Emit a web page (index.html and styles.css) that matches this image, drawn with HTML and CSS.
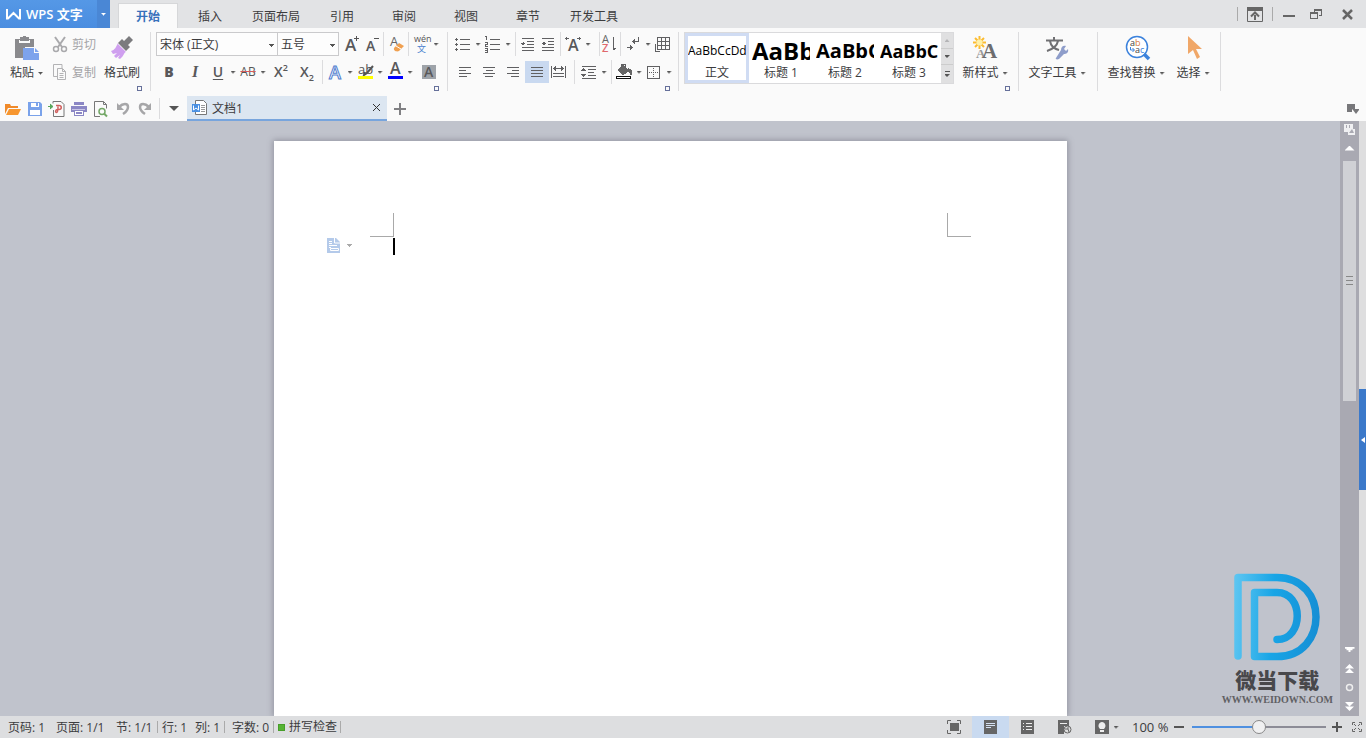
FILE: index.html
```html
<!DOCTYPE html>
<html lang="zh-CN">
<head>
<meta charset="utf-8">
<meta name="viewport" content="width=device-width, initial-scale=1">
<title>WPS 文字 - 文档1</title>
<link rel="stylesheet" href="styles.css">
</head>
<body>
<header class="titlebar">
  <button class="brand" aria-label="WPS 文字">
    <svg width="16" height="14" viewBox="0 0 16 14"><path d="M1 2v9.500h1L7.500 6l5.500 5.500h1V2" fill="none" stroke="#fff" stroke-width="2"/></svg>
    <span>WPS 文字</span>
  </button>
  <button class="brand-more" aria-label="菜单"><i class="tri"></i></button>
  <nav class="tabs">
    <button class="tab active">开始</button>
    <button class="tab">插入</button>
    <button class="tab">页面布局</button>
    <button class="tab">引用</button>
    <button class="tab">审阅</button>
    <button class="tab">视图</button>
    <button class="tab">章节</button>
    <button class="tab">开发工具</button>
  </nav>
  <div class="window">
    <i class="bar"></i>
    <button class="w34" aria-label="隐藏功能区"><svg width="16" height="15"><path d="M.5.500h15v14H.5z" fill="none" stroke="#666"/><path d="M0 0h16v4H0zM7 8h2v5H7z" fill="#666"/><path d="M4 9.500L8 5.500l4 4" fill="none" stroke="#666" stroke-width="2"/></svg></button>
    <i class="bar"></i>
    <button class="w32" aria-label="最小化"><svg width="12" height="12"><path d="M0 7h12v2H0z" fill="#666"/></svg></button>
    <button class="w22" aria-label="还原"><svg width="12" height="11" fill="none" stroke="#666" shape-rendering="crispEdges"><path d="M.5 4.500h7v5h-7zM0 3.500h8M4 3V.500h7.500v6H9M4 1.500h8"/></svg></button>
    <button class="w39" aria-label="关闭"><svg width="11" height="11"><path d="M1 1l9 9M10 1l-9 9" stroke="#666" stroke-width="2.500"/></svg></button>
  </div>
</header>

<section class="ribbon" aria-label="开始">
  <div class="group clip">
    <button class="big w45">
      <svg width="26" height="24"><path d="M1 3h5V1h3V0h3v1h3v2h5v8h-9v11H1z" fill="#8a8a8d"/><path d="M5 4h11v3H5z" fill="#fafafa"/><path d="M6 3h9v2H6z" fill="#8a8a8d"/><path d="M9 12h11v5h5v7H9z" fill="#7da3ec"/><path d="M21 12l4 4h-4z" fill="#7da3ec"/></svg>
      <span>粘贴 <i class="tri"></i></span>
    </button>
    <div class="stack w50">
      <button class="text-btn" disabled><svg width="16" height="17" fill="none" stroke="#a9a9ac" stroke-width="2"><path d="M3 1l7 10M13 1L6 11"/><circle cx="4" cy="13" r="2.500" stroke-width="1.500"/><circle cx="12" cy="13" r="2.500" stroke-width="1.500"/></svg><span>剪切</span></button>
      <button class="text-btn" disabled><svg width="16" height="17" fill="none" stroke="#b3b3b5"><path d="M5 12.500H1.500V.500H10V4M5.500 4.500h5l3 3v8h-8zM7.500 9.500h4M7.500 11.500h4M7.500 13.500h4M10.500 4.500v3h3"/></svg><span>复制</span></button>
    </div>
    <button class="big w46">
      <svg width="24" height="24"><path d="M19 0l4 4-5 5 2 2-4 4-8-8 4-4 2 2z" fill="#7b7b7e"/><path d="M8 8l8 8c-2 0-2 4-6 7l-2-1 2-3-4 3-2-2 3-3-4 1-2-3c4-1 5-4 7-8z" fill="#cf9fef"/></svg>
      <span>格式刷</span>
    </button>
    <button class="launcher" aria-label="剪贴板"></button>
  </div>

  <div class="group font">
    <div class="row">
      <label class="combo w122"><select aria-label="字体"><option>宋体 (正文)</option></select><i class="tri"></i></label>
      <label class="combo w62"><select aria-label="字号"><option>五号</option></select><i class="tri"></i></label>
      <button class="b20" aria-label="增大字号"><svg width="18" height="20"><text x="3" y="17" class="t-a16">A</text><path d="M12 4.500h5M14.500 2v5" stroke="#555"/></svg></button>
      <button class="b20" aria-label="减小字号"><svg width="18" height="20"><text x="4" y="17" class="t-a14">A</text><path d="M12 4.500h5" stroke="#555"/></svg></button>
      <i class="sep"></i>
      <button class="b20" aria-label="清除格式"><svg width="18" height="20"><text x="3" y="12" class="t-a14l">A</text><path d="M7 14l5-5 5 3-5 5c-2 1-6 0-5-3z" fill="#f0a050"/><path d="M9 12l5 3" stroke="#fff"/></svg></button>
      <i class="sep"></i>
      <button class="b20" aria-label="拼音指南"><svg width="20" height="20"><text x="3" y="8" class="t-py">wén</text><text x="6" y="18" class="t-wen">文</text></svg></button>
      <button class="drop" aria-label="更多"><i class="tri"></i></button>
    </div>
    <div class="row">
      <button class="b26 glyph"><b>B</b></button>
      <button class="b26 glyph serif"><em>I</em></button>
      <button class="b20 glyph"><u>U</u></button>
      <button class="drop" aria-label="下划线"><i class="tri"></i></button>
      <button class="b20 strike"><s>AB</s></button>
      <button class="drop" aria-label="删除线"><i class="tri"></i></button>
      <button class="b26 glyph"><span>X<sup>2</sup></span></button>
      <button class="b26 glyph"><span>X<sub>2</sub></span></button>
      <i class="sep"></i>
      <button class="b20" aria-label="文字效果"><svg width="18" height="20"><text x="3" y="17" class="t-fx">A</text></svg></button>
      <button class="drop" aria-label="更多"><i class="tri"></i></button>
      <button class="b20" aria-label="突出显示"><svg width="18" height="20"><text x="2" y="12" class="t-ab">ab</text><path d="M17 4l-6 7-3 2 1-3" stroke="#555" stroke-width="2" fill="none"/><path d="M2 14h15v3H2z" fill="#ff0"/></svg></button>
      <button class="drop" aria-label="更多"><i class="tri"></i></button>
      <button class="b20" aria-label="字体颜色"><svg width="18" height="20"><text x="4" y="12" class="t-a15">A</text><path d="M2 14h15v3H2z" fill="#00f"/></svg></button>
      <button class="drop" aria-label="更多"><i class="tri"></i></button>
      <button class="b28" aria-label="字符底纹"><svg width="16" height="16"><path d="M1 1h14v14H1z" fill="#9ea3a9"/><text x="3" y="13" class="t-a14">A</text></svg></button>
    </div>
    <button class="launcher" aria-label="字体设置"></button>
  </div>

  <div class="group para">
    <div class="row lines">
      <button class="b20" aria-label="项目符号"><svg width="18" height="20"><path d="M6 5.500h10M6 10.500h10M6 15.500h10"/><path d="M1 5.500h3M1 10.500h3M1 15.500h3M2.500 4v3M2.500 9v3M2.500 14v3"/></svg></button>
      <button class="drop" aria-label="更多"><i class="tri"></i></button>
      <button class="b20" aria-label="编号"><svg width="18" height="20"><path d="M6 5.500h10M6 10.500h10M6 15.500h10M1 2.500h1.500V6M1 8.500h2v1.500H1.500V12H4M1 14.500h2.500V18M1 16.500h2M1 18.500h3"/></svg></button>
      <button class="drop" aria-label="更多"><i class="tri"></i></button>
      <i class="sep"></i>
      <button class="b20" aria-label="减少缩进"><svg width="18" height="20"><path d="M3 4.500h12M8 7.500h7M8 10.500h7M3 13.500h12M3 16.500h12"/><path d="M2 9.500h4M4.500 8v3M3.500 9v2"/></svg></button>
      <button class="b20" aria-label="增加缩进"><svg width="18" height="20"><path d="M3 4.500h12M9 7.500h6M9 10.500h6M3 13.500h12M3 16.500h12"/><path d="M3 9.500h4M5.500 8v3M4.500 8v3"/></svg></button>
      <i class="sep"></i>
      <button class="b20" aria-label="中文版式"><svg width="18" height="20"><text x="4" y="17" class="t-a15">A</text><path d="M1 4.500h4M2.500 3v3M13 4.500h4M15.500 3v3"/></svg></button>
      <button class="drop" aria-label="更多"><i class="tri"></i></button>
      <i class="sep push"></i>
      <button class="b16" aria-label="排序"><svg width="16" height="20"><text x="0" y="9" class="t-sa">A</text><text x="0" y="18" class="t-sz">Z</text><path d="M11.500 3v13M12.500 14v2M13.500 14v1"/></svg></button>
      <i class="sep"></i>
      <button class="b20" aria-label="显示标记"><svg width="18" height="20"><path d="M14.500 3v4M8 7.500h7M10.500 5v5M9.500 6v3M3 13.500h6M6.500 11v5M7.500 12v3"/></svg></button>
      <button class="drop" aria-label="更多"><i class="tri"></i></button>
      <button class="b20" aria-label="表格"><svg width="18" height="20"><path d="M3.500 3.500h12v12h-12zM7.500 3v12M11.500 3v12M3 7.500h12M3 11.500h12M1.500 10v7H6"/></svg></button>
    </div>
    <div class="row lines">
      <button class="b24" aria-label="左对齐"><svg width="18" height="20"><path d="M3 5.500h12M3 8.500h7M3 11.500h12M3 14.500h8"/></svg></button>
      <button class="b24" aria-label="居中"><svg width="18" height="20"><path d="M3 5.500h12M6 8.500h7M3 11.500h12M5 14.500h8"/></svg></button>
      <button class="b24" aria-label="右对齐"><svg width="18" height="20"><path d="M3 5.500h12M8 8.500h7M3 11.500h12M7 14.500h8"/></svg></button>
      <button class="b24 on" aria-label="两端对齐"><svg width="18" height="20"><path d="M3 5.500h12M3 8.500h12M3 11.500h12M3 14.500h12"/></svg></button>
      <button class="b20" aria-label="分散对齐"><svg width="18" height="20"><path d="M1.500 4v12M15.500 4v12M3 6.500h11M4.500 5v3M12.500 5v3M5.500 4v5M11.500 4v5M3 11.500h11M3 14.500h11"/></svg></button>
      <i class="sep gap"></i>
      <button class="b20" aria-label="行距"><svg width="18" height="20"><path d="M2 4.500h14M8 7.500h8M8 10.500h6M8 13.500h8M2 16.500h14"/><path d="M1 8.500h5M2 7.500h3M3 6.500h1M1 12.500h5M2 13.500h3M3 14.500h1"/></svg></button>
      <button class="drop" aria-label="更多"><i class="tri"></i></button>
      <i class="sep"></i>
      <button class="b20" aria-label="底纹"><svg width="18" height="20"><path d="M2 8l6-5 7 6-7 4z" class="solid"/><path d="M13 6l4 2v5h-2z" class="solid"/><path d="M6.500 6V2.500h4V6"/><path d="M1.500 14.500h14v2h-14z" class="ink"/></svg></button>
      <button class="drop" aria-label="更多"><i class="tri"></i></button>
      <button class="b20" aria-label="边框"><svg width="18" height="20"><path d="M2.500 4.500h12v12h-12z"/><path d="M8.500 6v9M4 10.500h9" stroke-dasharray="1 1"/></svg></button>
      <button class="drop" aria-label="更多"><i class="tri"></i></button>
    </div>
    <button class="launcher" aria-label="段落设置"></button>
  </div>

  <div class="group styles">
    <div class="gallery">
      <button class="style on"><span class="sample s0">AaBbCcDd</span><span>正文</span></button>
      <button class="style"><span class="sample s1">AaBb</span><span>标题 1</span></button>
      <button class="style"><span class="sample s2">AaBbC</span><span>标题 2</span></button>
      <button class="style"><span class="sample s3">AaBbC</span><span>标题 3</span></button>
      <div class="scroller">
        <button aria-label="向上" disabled><i class="tri up"></i></button>
        <button aria-label="向下"><i class="tri"></i></button>
        <button aria-label="更多样式"><i class="dash"></i><i class="tri"></i></button>
      </div>
    </div>
    <button class="big w62b">
      <svg width="26" height="24"><g stroke="#fbbc30" stroke-width="2"><path d="M7.500 0v13M1 6.500h13M3 2l9 9M12 2l-9 9"/></g><circle cx="7.500" cy="6.500" r="3" fill="#fff1a8"/><text x="4" y="22" class="t-ns">A</text><text x="10" y="22" class="t-nb">A</text></svg>
      <span>新样式 <i class="tri"></i></span>
    </button>
    <button class="launcher" aria-label="样式设置"></button>
  </div>

  <div class="group tools">
    <button class="big w76">
      <svg width="26" height="24"><path d="M10 1v3M2 4.500h17M6 5c1 6 5 8 9 9M14 5c-1 5-5 8-11 10" fill="none" stroke="#707073" stroke-width="2"/><path d="M12 22l5-8c0-4 3-5 5-4l-2 3 2 2 2-2c1 4-2 5-4 5l-5 5c-2 1-4 0-3-1z" fill="#8e9dca"/></svg>
      <span>文字工具 <i class="tri"></i></span>
    </button>
  </div>

  <div class="group edit">
    <button class="big w76">
      <svg width="22" height="24"><circle cx="12" cy="11" r="10.500" fill="#fff" stroke="#3c82dc" stroke-width="1.500"/><path d="M19 18l5 5" stroke="#3c82dc" stroke-width="3.500"/><text x="5" y="10" class="t-f">a<tspan fill="#d8763a">b</tspan></text><text x="10" y="17" class="t-f">a<tspan fill="#3c82dc">c</tspan></text><path d="M5.500 11v3H9M7.500 12l2 2-2 2" fill="none" stroke="#3c82dc"/></svg>
      <span>查找替换 <i class="tri"></i></span>
    </button>
    <button class="big w38">
      <svg width="14" height="24"><path d="M2 0l14 13h-6l4 8-3 2-4-9-5 4z" fill="#f0a768"/></svg>
      <span>选择 <i class="tri"></i></span>
    </button>
  </div>
</section>

<div class="quickbar">
  <button class="b22" aria-label="打开"><svg width="16" height="16"><path d="M0 3h5l1 2h7v2H3l-3 6z" fill="#f08a2a"/><path d="M4 8h12l-3 6H1z" fill="#f7962f"/></svg></button>
  <button class="b22" aria-label="保存"><svg width="16" height="16"><path d="M1 1h12l2 2v12H1z" fill="#7aa2ea"/><path d="M4 2h8v4H4zM3 9h10v5H3z" fill="#fff"/><path d="M9 2h2v3H9z" fill="#7aa2ea"/></svg></button>
  <button class="b22" aria-label="输出为PDF"><svg width="18" height="16"><path d="M5 2.500V.500h8l3 3v12H5.500V9" fill="none" stroke="#777"/><path d="M0 5.500h3M2 3l3 2.500L2 8" fill="#57a55a" stroke="#57a55a"/><path d="M8 4.500h3c3 0 3 4 0 4h-1.500c-2 0-2.500 3-1 3s1.500-3 1.500-6" fill="none" stroke="#d0605e" stroke-width="1.500"/></svg></button>
  <button class="b22" aria-label="打印"><svg width="16" height="16"><path d="M3 1h10v3H3zM0 5h16v6h-3v4H3v-4H0z" fill="#8b87c5"/><path d="M4 10h8v4H4z" fill="#fff"/><path d="M5 11h6v2H5z" fill="#8b87c5"/><path d="M1 8h13v1H1z" fill="#c8c5e6"/></svg></button>
  <button class="b22" aria-label="打印预览"><svg width="16" height="16"><path d="M7 15.500H1.500v-15h9l3 3v4M10.500.500v3h3" fill="none" stroke="#777"/><circle cx="9" cy="10.500" r="3" fill="none" stroke="#74a867" stroke-width="1.500"/><path d="M11 12.500l3 3" stroke="#74a867" stroke-width="2"/></svg></button>
  <button class="b22" aria-label="撤销"><svg width="16" height="16"><path d="M4 6c4-4 9-4 9 0 0 3-2 5-5 7" fill="none" stroke="#a6a6a8" stroke-width="2.500"/><path d="M2 2v7h7z" fill="#a6a6a8"/></svg></button>
  <button class="b22" aria-label="恢复"><svg width="16" height="16"><path d="M12 6C8 2 3 2 3 6c0 3 2 5 5 7" fill="none" stroke="#a6a6a8" stroke-width="2.500"/><path d="M14 2v7H7z" fill="#a6a6a8"/></svg></button>
  <i class="sep tall"></i>
  <button class="b26" aria-label="自定义"><i class="tri large"></i></button>
  <div class="doc-tab">
    <svg width="16" height="15"><path d="M3.500 4V.500h8l3 3v11h-11V12" fill="#fff" stroke="#777"/><path d="M9 5.500h4M9 7.500h4M9 9.500h4M9 11.500h4" stroke="#999"/><path d="M0 4h8v8H0z" fill="#4a90e2"/><path d="M1.500 5.500V10L4 8l2.500 2V5.500" fill="none" stroke="#fff"/></svg>
    <span>文档1</span>
    <button class="close" aria-label="关闭文档"><svg width="9" height="9"><path d="M1 1l7 7M8 1L1 8" stroke="#333"/></svg></button>
  </div>
  <button class="b26" aria-label="新建"><svg width="12" height="12"><path d="M0 6h12M6 0v12" stroke="#808083" stroke-width="2"/></svg></button>
  <button class="b26 end" aria-label="任务窗格"><svg width="14" height="12"><path d="M1 1h8v5H6v3H1zM6 6h7v1l-3 4-3-4z" fill="#77777a"/></svg></button>
</div>

<main class="workspace">
  <div class="canvas">
    <article class="page">
      <div class="margins"><i class="corner left"></i><i class="corner right"></i></div>
      <div class="line">
        <button class="tag" aria-label="文档选项"><svg width="13" height="15"><path d="M0 0h9l4 4v11H0z" fill="#b4caea"/><path d="M7.500 0v5H13M2 3.500h3M2 5.500h3M2 7.500h8M3.500 10.500h8v2h-8zM2 9.500h2" fill="none" stroke="#fff"/></svg><i class="tri"></i></button>
        <i class="cursor"></i>
      </div>
    </article>
  </div>
  <div class="scrollbar">
    <button class="h18" aria-label="导航"><svg width="12" height="12"><path d="M0 0h9v5h2v6H4V8H0z" fill="#f0f0f2"/><path d="M2 1h1v3H2zM5 1h1v3H5zM5 9l3-4 2 4z" fill="#a9a9b2"/></svg></button>
    <button class="h22" aria-label="上移"><i class="tri up big-tri"></i></button>
    <div class="track"><div class="thumb"><i></i><i></i><i></i></div></div>
    <button class="h19" aria-label="下移"><i class="tri big-tri"></i></button>
    <button class="h19" aria-label="上一页"><svg width="9" height="9" fill="#fff"><path d="M0 4.500L4.500 0 9 4.500zM0 9l4.500-4.500L9 9z"/></svg></button>
    <button class="h19" aria-label="选择浏览对象"><svg width="9" height="9"><circle cx="4.500" cy="4.500" r="3" fill="none" stroke="#eee" stroke-width="1.500"/></svg></button>
    <button class="h19" aria-label="下一页"><svg width="9" height="9" fill="#fff"><path d="M0 0h9L4.500 4.500zM0 4.500h9L4.500 9z"/></svg></button>
  </div>
  <aside class="edge"><button aria-label="展开任务窗格"><svg width="4" height="6"><path d="M4 0v6L0 3z" fill="#fff"/></svg></button></aside>
  <div class="watermark">
    <svg width="86" height="88" viewBox="0 0 86 88">
      <defs><linearGradient id="blue" gradientUnits="userSpaceOnUse" x1="0" y1="40" x2="86" y2="44"><stop offset="0" stop-color="#5cc5f1"/><stop offset=".45" stop-color="#18a5e6"/><stop offset="1" stop-color="#168ed4"/></linearGradient></defs>
      <g fill="none" stroke="url(#blue)" stroke-width="7.500" stroke-linecap="round" stroke-linejoin="round"><path d="M4 83V4.500h39c52 0 52 79 0 79H20.500V19.500H43c27 0 27 47 0 47"/></g>
    </svg>
    <strong>微当下载</strong>
    <span>WWW.WEIDOWN.COM</span>
  </div>
</main>

<footer class="status">
  <span class="m48">页码: 1</span>
  <span class="m60">页面: 1/1</span>
  <span class="m41">节: 1/1</span>
  <span class="m38 cut">行: 1</span>
  <span class="m29">列: 1</span>
  <span class="m48 cut wide">字数: 0</span>
  <span class="cut spell"><i class="ok"></i>拼写检查</span>
  <i class="cut"></i>
  <div class="views">
    <button aria-label="全屏"><svg width="14" height="14"><path d="M3 3h9v8H3z" fill="#666"/><path d="M.5 4V.500H4M10 .500h3.500V4M.5 10v3.500H4M10 13.500h3.500V10" fill="none" stroke="#666"/></svg></button>
    <button class="on" aria-label="页面视图"><svg width="13" height="14"><path d="M0 0h13v14H0z" fill="#666"/><path d="M2 3.500h9M2 5.500h9M2 7.500h5" stroke="#d5e1f2"/></svg></button>
    <button aria-label="大纲"><svg width="13" height="14"><path d="M0 0h13v14H0z" fill="#666"/><path d="M2 3.500h1M5 3.500h6M2 6.500h1M5 6.500h6M2 9.500h1M5 9.500h6" stroke="#eee"/></svg></button>
    <button aria-label="Web 版式"><svg width="14" height="14"><path d="M0 0h11v6H6v8H0z" fill="#666"/><path d="M2 3.500h7" stroke="#eee"/><circle cx="9.500" cy="9.500" r="3.500" fill="#ddd" stroke="#666"/><path d="M7 9h3l1 3M10 7v2" fill="none" stroke="#666"/></svg></button>
    <button class="eye" aria-label="护眼模式"><svg width="14" height="14"><path d="M0 0h14v14H0z" fill="#666"/><path d="M5 9C2 6 4 2 7 2s5 4 2 7zM5 10h4v2H5z" fill="#eee"/></svg><i class="tri"></i></button>
  </div>
  <output class="percent" for="zoom">100 %</output>
  <button class="w22" aria-label="缩小"><svg width="10" height="10"><path d="M0 5h10" stroke="#555" stroke-width="2"/></svg></button>
  <input id="zoom" type="range" min="0" max="200" value="100" aria-label="显示比例">
  <button class="w22" aria-label="放大"><svg width="10" height="10"><path d="M0 5h10M5 0v10" stroke="#555" stroke-width="2"/></svg></button>
  <button class="w18" aria-label="最佳显示比例"><svg width="10" height="10" fill="none" stroke="#666"><path d="M.5 3V.500H3M7 .500h2.500V3M.5 7v2.500H3M7 9.500h2.500V7M2 2l2 2M8 2L6 4M2 8l2-2M8 8L6 6"/></svg></button>
</footer>
</body>
</html>
```
FILE: styles.css
```css
* { box-sizing: border-box; }
body {
  margin: 0;
  height: 100vh;
  display: flex;
  flex-direction: column;
  overflow: hidden;
  background: #fafafa;
  color: #3c3c3e;
  font: 12px/16px "Open Sans", "Noto Sans CJK SC", sans-serif;
}
button, select, input { font: inherit; color: inherit; }
button {
  display: flex;
  align-items: center;
  justify-content: center;
  flex: none;
  padding: 0;
  border: 0;
  background: none;
  white-space: nowrap;
}
svg { display: block; flex: none; overflow: visible; }
i { display: block; flex: none; }
/* Stepped 5/3/1 pixel arrow */
.tri {
  width: 5px;
  height: 3px;
  background: #555;
  clip-path: polygon(0 0, 100% 0, 100% 34%, 80% 34%, 80% 67%, 60% 67%, 60% 100%, 40% 100%, 40% 67%, 20% 67%, 20% 34%, 0 34%);
}
.tri.up { clip-path: polygon(50% 0, 100% 100%, 0 100%); }
.tri.large, .tri.big-tri { width: 10px; height: 5px; }
.tri.large { clip-path: polygon(0 0, 100% 0, 50% 100%); }
.tri.big-tri { background: #fff; }

/* Title bar */
.titlebar { display: flex; flex: none; height: 28px; background: #e2e3e5; }
.brand {
  width: 97px;
  padding-left: 6px;
  justify-content: flex-start;
  gap: 4px;
  color: #fff;
  font-size: 13px;
  font-weight: 600;
  background: linear-gradient(#5598e6, #4a8de0);
}
.brand-more { width: 13px; background: #4a87d5; }
.brand-more .tri { background: #fff; }
.tabs { display: flex; padding: 3px 0 0 8px; }
.tab { min-width: 62px; padding: 2px 11px 0; height: 25px; }
.tab.active {
  min-width: 60px;
  margin-right: 1px;
  background: #fafafa;
  border: 1px solid #d6d7d9;
  border-bottom: 0;
  color: #3670bb;
  font-weight: 600;
}
.window { display: flex; align-items: center; margin-left: auto; }
.window .bar { width: 1px; height: 14px; background: #aaa; }
.w34 { width: 34px; }
.w32 { width: 32px; }
.w22 { width: 22px; }
.w39 { width: 39px; padding-left: 2px; }
.w18 { width: 18px; }

/* Ribbon */
.ribbon { display: flex; flex: none; height: 67px; padding-top: 4px; }
.group {
  position: relative;
  flex: none;
  height: 59px;
  border-right: 1px solid #dcdcde;
}
.clip { display: flex; width: 151px; padding-left: 4px; }
.font { width: 297px; padding-left: 5px; }
.para { width: 231px; padding-left: 5px; }
.styles { display: flex; width: 340px; padding-left: 5px; }
.tools { width: 79px; }
.edit { display: flex; width: 123px; }
.launcher {
  position: absolute;
  right: 8px;
  bottom: 0;
  width: 5px;
  height: 5px;
  border-top: 1px solid #66709a;
  border-left: 1px solid #66709a;
  background:
    linear-gradient(#66709a, #66709a) 100% 0 / 1px 1px no-repeat,
    linear-gradient(#66709a, #66709a) 0 100% / 1px 1px no-repeat,
    linear-gradient(#66709a, #66709a) 100% 100% / 1px 3px no-repeat,
    linear-gradient(#66709a, #66709a) 100% 100% / 3px 1px no-repeat;
}
.big { flex-direction: column; justify-content: flex-start; padding-top: 4px; height: 54px; }
.big svg { height: 24px; }
.big > span, .text-btn { display: flex; align-items: center; gap: 4px; line-height: 26px; }
.w45 { width: 45px; }
.w46 { width: 46px; }
.w50 { width: 50px; }
.w62b { width: 62px; }
.w76 { width: 76px; }
.w38 { width: 38px; }
.stack { padding-left: 3px; }
.stack .text-btn { height: 24px; margin-bottom: 4px; color: #a4a4a7; }
.text-btn span { padding-top: 1px; }
.row { display: flex; height: 24px; margin-bottom: 4px; }
.sep { width: 1px; margin: 0 2px; background: #dcdcde; }
.sep.push { margin-left: 6px; }
.sep.gap { margin: 0 4px 0 5px; }
.drop { width: 10px; }
.b16 { width: 16px; }
.b20 { width: 20px; }
.b22 { width: 22px; }
.b24 { width: 24px; }
.b26 { width: 26px; }
.b28 { width: 28px; }
.row .on { height: 22px; align-self: center; background: #c9d9f0; }

.combo { position: relative; display: block; height: 24px; }
.combo select {
  width: 100%;
  height: 24px;
  padding: 2px 3px 0;
  appearance: none;
  border: 1px solid #cacacc;
  border-radius: 0;
  background: #fdfdfd;
}
.combo .tri { position: absolute; right: 4px; top: 12px; }
.w122 { width: 122px; }
.w62 { width: 62px; margin: 0 2px 0 -1px; }

.glyph { color: #58585a; font-size: 14px; font-weight: 600; }
.glyph b { font-weight: 800; }
.glyph u { text-underline-offset: 2px; }
.serif { font-family: "Liberation Serif", serif; font-size: 16px; }
.glyph sup, .glyph sub { font-size: 9px; line-height: 0; }
.strike { font-size: 12px; color: #555; }
.strike s { text-decoration-color: #d75c5c; }
.t-a16, .t-a15, .t-a14 { font-size: 17px; font-weight: 600; fill: #58585a; }
.t-a15 { font-size: 16px; }
.t-a14 { font-size: 14px; }
.t-a14l { font-size: 13px; fill: #666; }
.t-py { font-size: 9px; fill: #555; }
.t-wen { font-size: 9px; fill: #4b83cf; }
.t-fx { font-size: 18px; font-weight: 600; fill: #fff; stroke: #527ed0; stroke-width: 1px; }
.t-ab { font-size: 13px; fill: #555; }
.t-sa { font-size: 11px; fill: #666; }
.t-sz { font-size: 11px; font-weight: 600; fill: #e0686c; }
.t-ns, .t-nb { font: bold 13px "Liberation Serif", serif; fill: #999; }
.t-nb { font-size: 21px; fill: #6c6c6e; }
.t-f { font-size: 9px; fill: #444; }
.lines path { stroke: #606062; fill: none; shape-rendering: crispEdges; }
.lines .ink { stroke: #111; fill: #fff; }
.lines .solid { stroke: none; fill: #666; }

.gallery {
  display: flex;
  width: 270px;
  height: 52px;
  border: 1px solid #dadadc;
  background: #fff;
}
.style { width: 64px; height: 50px; flex-direction: column; padding: 0 3px; overflow: hidden; }
.style.on { border: 3px solid #d0dcf3; padding: 0; }
.style > span { flex: none; line-height: 16px; }
.style .sample {
  align-self: stretch;
  height: 30px;
  overflow: hidden;
  line-height: 32px;
  color: #000;
  font-weight: 700;
  text-align: left;
}
.style .s0 { font-size: 12px; font-weight: 400; }
.s1 { font-size: 24px; }
.s2 { font-size: 20px; }
.s3 { font-size: 18px; }
.scroller { display: grid; flex: 1; gap: 1px; background: #ccc; }
.scroller button { flex-direction: column; gap: 2px; background: #e0e0e1; }
.scroller button:disabled .tri { background: #b4b4b6; }
.dash { width: 5px; height: 1px; background: #555; }

/* Quick access and document tabs */
.quickbar { display: flex; flex: none; height: 26px; padding: 1px 0 0 2px; }
.quickbar .tall { margin: 2px 1px 2px 3px; }
.doc-tab {
  display: flex;
  align-items: center;
  gap: 4px;
  width: 200px;
  padding: 0 6px 0 5px;
  background: #dce6f1;
  border-bottom: 2px solid #78a5dd;
}
.doc-tab span { padding-top: 2px; }
.close { width: 9px; margin-left: auto; }
.end { margin-left: auto; }

/* Document area */
.workspace { position: relative; display: flex; flex: 1; min-height: 0; background: #c0c3cc; }
.canvas {
  display: flex;
  flex: 1;
  justify-content: center;
  overflow: hidden;
  padding: 20px 0 0 1px;
}
.page {
  width: 793px;
  padding-top: 72px;
  background: #fff;
  box-shadow: 0 0 6px 1px #91939f;
}
.margins { display: flex; justify-content: space-between; padding: 0 96px; }
.corner { width: 24px; height: 24px; border-bottom: 1px solid #a9a9a9; }
.corner.left { border-right: 1px solid #a9a9a9; }
.corner.right { border-left: 1px solid #a9a9a9; }
.line { display: flex; padding: 1px 96px 0 53px; }
.tag { gap: 7px; height: 15px; }
.tag .tri { background: #aaa; }
.cursor { width: 2px; height: 17px; margin-left: 41px; background: #000; }
.scrollbar { display: flex; flex-direction: column; width: 19px; background: #a9a9b2; }
.h18 { height: 18px; }
.h22 { height: 22px; padding-bottom: 4px; }
.h19 { height: 19px; }
.track { flex: 1; padding: 0 3px; }
.thumb {
  display: flex;
  flex-direction: column;
  align-items: center;
  justify-content: center;
  gap: 3px;
  height: 50%;
  background: #d0d1d5;
}
.thumb i { width: 7px; height: 1px; background: #888; }
.edge { width: 7px; background: #dededf; display: flex; flex-direction: column; }
.edge::before { content: ""; flex: 268; }
.edge::after { content: ""; flex: 226; }
.edge button { height: 101px; background: #3b79ca; }
.watermark {
  position: absolute;
  right: 33px;
  bottom: 9px;
  display: flex;
  flex-direction: column;
  align-items: center;
  color: #48484b;
}
.watermark strong { font: 900 21px/28px "Noto Sans CJK SC", sans-serif; margin-top: 4px; }
.watermark span { font: bold 10px/14px "Liberation Serif", serif; color: #606064; }

/* Status bar */
.status { display: flex; align-items: center; flex: none; height: 22px; padding-left: 8px; background: #dddee0; }
.status > span { height: 12px; line-height: 14px; white-space: nowrap; }
.cut { border-left: 1px solid #aaa; height: 12px; }
.m48 { min-width: 48px; }
.m60 { min-width: 60px; }
.m41 { min-width: 41px; }
.m38 { min-width: 38px; padding-left: 4px; }
.m29 { min-width: 29px; }
.wide { min-width: 49px; padding-left: 7px; }
.spell { display: flex; align-items: center; gap: 4px; padding: 0 3px 0 4px; }
.ok { width: 7px; height: 7px; background: #56b434; border: 1px solid #479e2a; }
.views { display: flex; align-self: stretch; margin-left: auto; }
.views button { width: 37px; gap: 5px; }
.views .on { background: #c9daf0; }
.views .eye { padding-left: 10px; }
.percent { width: 48px; padding-left: 12px; font-size: 13px; white-space: nowrap; }
#zoom {
  width: 134px;
  height: 16px;
  margin: 0 0 0 2px;
  appearance: none;
  background: linear-gradient(90deg, #4f90e0 50%, #8c8c96 50%) center / 100% 2px no-repeat;
}
#zoom::-webkit-slider-thumb {
  appearance: none;
  width: 14px;
  height: 14px;
  border: 1px solid #888;
  border-radius: 50%;
  background: #f0f0f1;
}
```
